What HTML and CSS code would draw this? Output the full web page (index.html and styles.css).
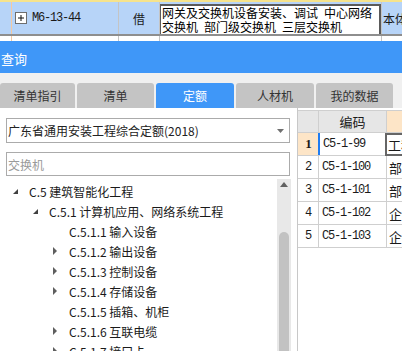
FILE: index.html
```html
<!DOCTYPE html>
<html lang="zh-CN">
<head>
    <meta charset="UTF-8">
    <title>查询</title>
    <link rel="stylesheet" href="styles.css">
</head>
<body>
    <div class="grid">
        <div class="grid-row current">
            <div class="cell c-mark"></div>
            <div class="cell c-code">
                <svg class="plus" width="12" height="12" viewBox="0 0 12 12">
                    <rect x="0.5" y="0.5" width="11" height="11" fill="#fff" stroke="#6e6e6e"/>
                    <path d="M3 6H9M6 3V9" stroke="#111" stroke-width="1"/>
                </svg>
                <span class="mono">M6-13-44</span>
            </div>
            <div class="cell c-type">借</div>
            <div class="cell c-name">
                <div class="name-edit">网关及交换机设备安装、调试&ensp;中心网络交换机&ensp;部门级交换机&ensp;三层交换机</div>
            </div>
            <div class="cell c-unit">本体</div>
        </div>
        <div class="grid-row next">
            <div class="cell c-mark"></div>
            <div class="cell c-code"></div>
            <div class="cell c-type"></div>
            <div class="cell c-name"></div>
            <div class="cell c-unit"></div>
        </div>
    </div>

    <div class="query-header">查询</div>

    <div class="tabs">
        <div class="tab w75">清单指引</div>
        <div class="tab w77">清单</div>
        <div class="tab w78 active">定额</div>
        <div class="tab w78">人材机</div>
        <div class="tab w77">我的数据</div>
    </div>

    <div class="main">
        <div class="left-panel">
            <div class="select">
                <span>广东省通用安装工程综合定额(2018)</span>
                <svg width="7" height="4" viewBox="0 0 7 4"><path d="M0 0H7L3.5 4Z" fill="#707070"/></svg>
            </div>
            <div class="search">交换机</div>
            <div class="tree-area">
                <div class="tree">
                    <div class="node lv0"><span class="tw open"></span>C.5 建筑智能化工程</div>
                    <div class="node lv1"><span class="tw open"></span>C.5.1 计算机应用、网络系统工程</div>
                    <div class="node lv2"><span class="tw"></span>C.5.1.1 输入设备</div>
                    <div class="node lv2"><span class="tw shut"></span>C.5.1.2 输出设备</div>
                    <div class="node lv2"><span class="tw shut"></span>C.5.1.3 控制设备</div>
                    <div class="node lv2"><span class="tw shut"></span>C.5.1.4 存储设备</div>
                    <div class="node lv2"><span class="tw"></span>C.5.1.5 插箱、机柜</div>
                    <div class="node lv2"><span class="tw shut"></span>C.5.1.6 互联电缆</div>
                    <div class="node lv2"><span class="tw shut"></span>C.5.1.7 接口卡</div>
                </div>
                <div class="scrollbar">
                    <svg class="sb-up" width="8" height="5" viewBox="0 0 8 5"><path d="M0 5L4 0L8 5Z" fill="#606060"/></svg>
                    <div class="sb-thumb"></div>
                </div>
            </div>
        </div>

        <div class="right-panel">
            <div class="trow head">
                <div class="tc num"></div>
                <div class="tc code">编码</div>
                <div class="tc name hl"></div>
            </div>
            <div class="trow">
                <div class="tc num hl bold">1</div>
                <div class="tc code sel">C5-1-99</div>
                <div class="tc name"><span class="cur">工程</span></div>
            </div>
            <div class="trow">
                <div class="tc num">2</div>
                <div class="tc code">C5-1-100</div>
                <div class="tc name">部门</div>
            </div>
            <div class="trow">
                <div class="tc num">3</div>
                <div class="tc code">C5-1-101</div>
                <div class="tc name">部门</div>
            </div>
            <div class="trow">
                <div class="tc num">4</div>
                <div class="tc code">C5-1-102</div>
                <div class="tc name">企业</div>
            </div>
            <div class="trow">
                <div class="tc num">5</div>
                <div class="tc code">C5-1-103</div>
                <div class="tc name">企业</div>
            </div>
        </div>
    </div>
</body>
</html>
```

FILE: styles.css
```css
* {
    margin: 0;
    padding: 0;
    box-sizing: border-box;
}

body {
    width: 402px;
    height: 351px;
    overflow: hidden;
    background: #f0f0f0;
    font-family: "Noto Sans CJK SC", sans-serif;
    color: #1a1a1a;
}

.mono {
    font-family: "Liberation Mono", "Noto Sans CJK SC", monospace;
    font-size: 12px;
    letter-spacing: -1.2px;
}

/* 上方表格 */
.grid {
    background: #fff;
}

.grid-row {
    display: flex;
    white-space: nowrap;
}

.grid-row.current {
    height: 36px;
    background: #b7d4f8;
    border-top: 2px solid #f6e38c;
    border-bottom: 2px solid #8e8e8e;
}

.grid-row.next {
    height: 5px;
}

.cell {
    flex: none;
    display: flex;
    align-items: center;
    border-right: 1px solid #c4c4c4;
    font-size: 12px;
    overflow: hidden;
}

.c-mark {
    width: 12px;
    border-right-color: #f3c9a2;
}

.c-code {
    width: 107px;
    padding-left: 3px;
    gap: 5px;
}

.c-type {
    width: 41px;
    justify-content: center;
}

.c-name {
    width: 222px;
    align-items: stretch;
    padding-top: 2px;
}

.c-unit {
    flex: 1;
    border-right: none;
    padding-left: 1px;
}

.plus {
    flex: none;
}

.name-edit {
    flex: 1;
    background: #fff;
    border: 2px solid #5a5a5a;
    border-bottom: none;
    margin-left: -1px;
    padding: 0 0 0 1px;
    font-size: 12px;
    line-height: 14px;
    white-space: normal;
    color: #000;
    overflow: hidden;
}

/* 查询标题 */
.query-header {
    height: 32px;
    background: #3f97f8;
    color: #fff;
    font-size: 13px;
    padding: 3px 0 0 1px;
    display: flex;
    align-items: center;
}

/* 页签 */
.tabs {
    display: flex;
    gap: 2px;
    padding-top: 10px;
    height: 35px;
}

.tab {
    height: 25px;
    background: #c4c4c4;
    border-radius: 3px 3px 0 0;
    display: flex;
    align-items: center;
    justify-content: center;
    font-size: 12px;
    color: #333;
}

.tab.active {
    background: #3f97f8;
    color: #fff;
}

.w75 { width: 75px; }
.w77 { width: 77px; }
.w78 { width: 78px; }

/* 主体 */
.main {
    display: flex;
    height: 243px;
    background: #fff;
}

.left-panel {
    width: 297px;
    flex: none;
    display: flex;
    flex-direction: column;
    padding-top: 10px;
}

.select,
.search {
    margin-left: 6px;
    width: 284px;
    border: 1px solid #ababab;
    font-size: 12px;
    display: flex;
    align-items: center;
    padding-left: 1px;
}

.select {
    height: 25px;
    justify-content: space-between;
    padding-right: 5px;
    color: #222;
}

.search {
    height: 24px;
    margin-top: 9px;
    color: #9a9a9a;
}

.tree-area {
    flex: 1;
    display: flex;
    padding-top: 3px;
    overflow: hidden;
}

.tree {
    flex: 1;
    padding-top: 2px;
}

.node {
    height: 20px;
    display: flex;
    align-items: center;
    font-size: 12px;
    white-space: nowrap;
}

.lv0 { padding-left: 12px; }
.lv1 { padding-left: 32px; }
.lv2 { padding-left: 52px; }

.tw {
    width: 17px;
    height: 20px;
    flex: none;
    position: relative;
}

.tw.open::before {
    content: "";
    position: absolute;
    left: 1px;
    top: 8px;
    border-style: solid;
    border-width: 0 0 5px 5px;
    border-color: transparent transparent #404040 transparent;
}

.tw.shut::before {
    content: "";
    position: absolute;
    left: 1px;
    top: 6px;
    border-style: solid;
    border-width: 4px 0 4px 4px;
    border-color: transparent transparent transparent #5e5e5e;
}

.scrollbar {
    width: 14px;
    flex: none;
    margin-right: 6px;
    background: #e8e8e8;
    display: flex;
    flex-direction: column;
    align-items: center;
}

.sb-up {
    margin-top: 3px;
}

.sb-thumb {
    width: 10px;
    flex: 1;
    margin-top: 45px;
    margin-bottom: -20px;
    background: #c2c2c2;
    border-radius: 5px;
}

/* 右侧表格 */
.right-panel {
    flex: 1;
    border-left: 1px solid #c8c8c8;
    padding-top: 2px;
    overflow: hidden;
}

.trow {
    display: flex;
    height: 23px;
    border-bottom: 1px solid #cfcfcf;
    white-space: nowrap;
}

.trow.head {
    border-top: 1px solid #cfcfcf;
}

.tc {
    flex: none;
    display: flex;
    align-items: center;
    border-right: 1px solid #cfcfcf;
    font-family: "Liberation Mono", "Noto Sans CJK SC", monospace;
    font-size: 12px;
    letter-spacing: -1.2px;
}

.head .tc {
    background: #e6e6e6;
    font-family: "Noto Sans CJK SC", sans-serif;
    font-size: 13px;
    letter-spacing: 0;
}

.tc.num {
    width: 21px;
    justify-content: center;
}

.tc.code {
    width: 68px;
    padding-left: 3px;
}

.head .tc.code {
    justify-content: center;
    padding-left: 0;
}

.tc.name {
    width: 40px;
    border-right: none;
    padding-left: 2px;
    font-family: "Noto Sans CJK SC", sans-serif;
    font-size: 13px;
    letter-spacing: 0;
}

.head .tc.hl,
.tc.hl {
    background: #fde5c7;
}

.bold {
    font-family: "Liberation Serif", serif;
    font-weight: bold;
    font-size: 13px;
}

.tc.sel {
    border-left: 2px solid #1f7cf2;
    margin-left: -1px;
}

.tc .cur {
    display: flex;
    align-items: center;
    height: 23px;
    margin-left: -3px;
    padding-left: 1px;
    border: 2px solid #666;
    border-right: none;
}
```
